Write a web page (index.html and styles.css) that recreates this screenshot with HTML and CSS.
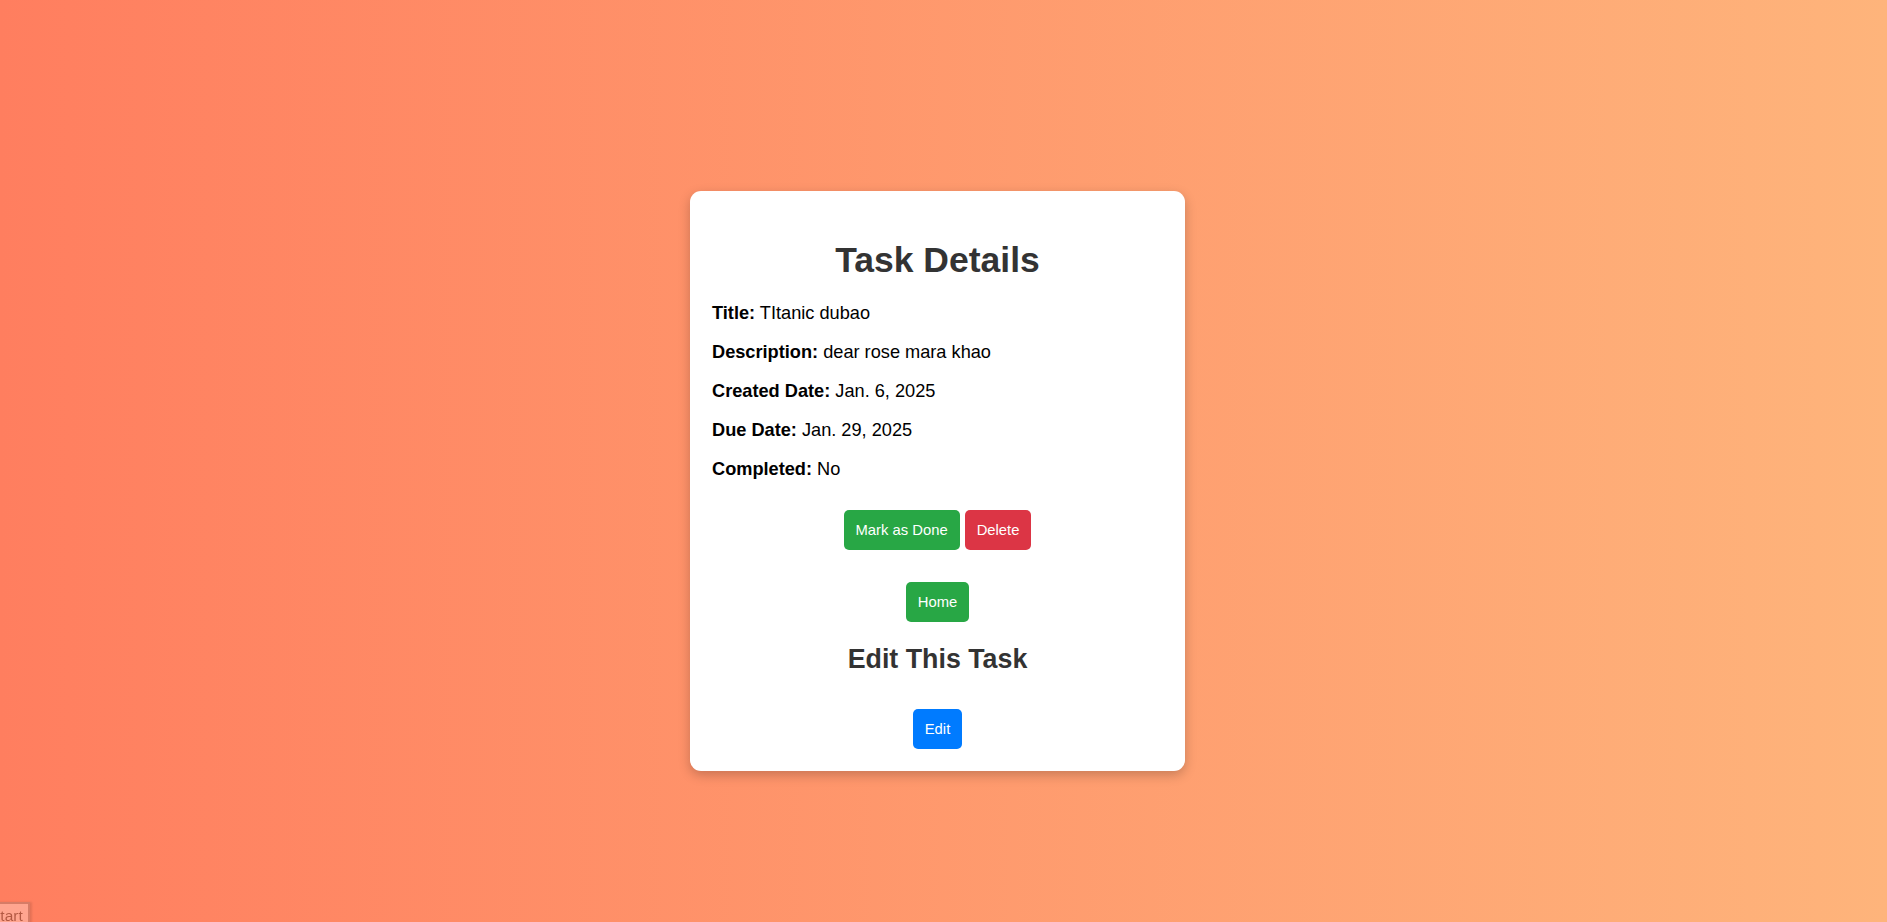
FILE: index.html
```html
<!DOCTYPE html>
<html lang="en">
<head>
<meta charset="utf-8">
<title>Task Details</title>
<link rel="stylesheet" href="styles.css">
</head>
<body>
<main class="page">
  <section class="card">
    <h1 class="card-title">Task Details</h1>
    <p class="field"><strong>Title:</strong> TItanic dubao</p>
    <p class="field"><strong>Description:</strong> dear rose mara khao</p>
    <p class="field"><strong>Created Date:</strong> Jan. 6, 2025</p>
    <p class="field"><strong>Due Date:</strong> Jan. 29, 2025</p>
    <p class="field"><strong>Completed:</strong> No</p>
    <div class="actions">
      <button class="btn btn-green">Mark as Done</button>
      <button class="btn btn-red">Delete</button>
    </div>
    <div class="row home-row">
      <button class="btn btn-green">Home</button>
    </div>
    <h2 class="sub-title">Edit This Task</h2>
    <div class="row edit-row">
      <button class="btn btn-blue">Edit</button>
    </div>
  </section>
</main>
<button class="start-btn">Start</button>
</body>
</html>
```
FILE: styles.css
```css
html, body {
  margin: 0;
  padding: 0;
}
body {
  height: 922px;
  overflow: hidden;
  background: linear-gradient(to right, #ff7e5f, #feb47b);
  font-family: "Liberation Sans", Arial, sans-serif;
  color: #000;
}
.page {
  display: flex;
  justify-content: center;
  align-items: flex-start;
  padding: 191px 12px 0 0;
}
.card {
  width: 495px;
  box-sizing: border-box;
  background: #fff;
  border-radius: 11px;
  padding: 22px 22px 22px;
  box-shadow: 0 4px 12px rgba(0, 0, 0, 0.22);
}
.card-title {
  margin: 27px 0 23px;
  font-size: 35.5px;
  line-height: 40px;
  font-weight: bold;
  text-align: center;
  color: #333;
}
.field {
  margin: 0 0 18px;
  font-size: 18.2px;
  line-height: 21px;
}
.field:last-of-type {
  margin-bottom: 0;
}
.actions {
  display: flex;
  justify-content: center;
  gap: 5px;
  margin-top: 30px;
}
.row {
  display: flex;
  justify-content: center;
}
.home-row {
  margin-top: 32px;
}
.sub-title {
  margin: 21.5px 0 0;
  font-size: 26.8px;
  line-height: 31px;
  font-weight: bold;
  text-align: center;
  color: #333;
}
.edit-row {
  margin-top: 34px;
}
.btn {
  font-family: "Liberation Sans", Arial, sans-serif;
  font-size: 14.8px;
  line-height: 18px;
  padding: 11px 12px;
  height: 40px;
  border: none;
  border-radius: 5px;
  color: #fff;
  cursor: pointer;
}
.btn-green { background: #28a745; }
.btn-red { background: #dc3545; }
.btn-blue { background: #007bff; }
.start-btn {
  position: fixed;
  left: -18px;
  top: 902px;
  opacity: 0.3;
  background: #fff;
  border: 2px solid #777;
  padding: 3px 5px 4px 6px;
  font-family: "Liberation Sans", Arial, sans-serif;
  font-size: 15.5px;
  line-height: 18px;
  color: #000;
  box-shadow: 2px 0 2px rgba(0, 0, 0, 0.35);
}
```
